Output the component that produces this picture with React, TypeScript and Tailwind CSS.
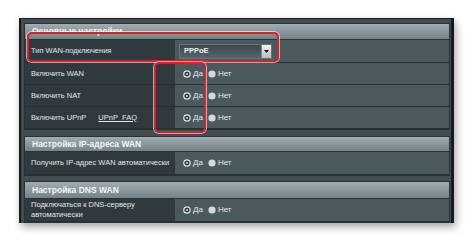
import type { ReactNode } from 'react'

function Radio({ checked }: { checked: boolean }) {
  return checked ? (
    <svg width="8" height="8" viewBox="0 0 8 8" className="shrink-0">
      <circle cx="4" cy="4" r="3.2" fill="#2a3336" stroke="#e6eaec" strokeWidth="1.2" />
      <circle cx="4" cy="4" r="1" fill="#e6eaec" />
    </svg>
  ) : (
    <svg width="8" height="8" viewBox="0 0 8 8" className="shrink-0">
      <circle cx="4" cy="4" r="3.6" fill="#d4d9db" />
    </svg>
  )
}

function YesNo() {
  return (
    <div className="flex items-center text-[8px] text-[#e4e8ea]">
      <Radio checked />
      <span className="ml-[2px]">Да</span>
      <span className="ml-[5px]"><Radio checked={false} /></span>
      <span className="ml-[2px]">Нет</span>
    </div>
  )
}

function Header({ title, h = 'h-[15px]' }: { title: string; h?: string }) {
  return (
    <div className={`${h} flex items-center pl-[7px] bg-gradient-to-b from-[#a0adb1] to-[#74838a] border-b border-[#2a3235] text-[8.5px] font-bold text-[#f4f6f7] whitespace-nowrap`}>
      {title}
    </div>
  )
}

function Row({ label, children, h = 'h-[22px]' }: { label: ReactNode; children: ReactNode; h?: string }) {
  return (
    <div className={`${h} flex border-b border-[#283033]`}>
      <div className="w-[150px] flex items-center pl-[6px] bg-[#303a3e] text-[7.5px] leading-[10px] text-[#e2e6e8] whitespace-nowrap">{label}</div>
      <div className="flex-1 flex items-center pl-[8px] bg-[#4a595e]">{children}</div>
    </div>
  )
}

export default function App() {
  return (
    <div className="relative w-[474px] h-[243px] bg-white overflow-hidden pt-[18px] pl-[19px]" style={{ fontFamily: '"Liberation Sans", Arial, sans-serif' }}>
      <div className="w-[435px] h-[205px] bg-[#434c50] border-l-2 border-r-[3px] border-t border-[#161b1d] shadow-[2px_4px_8px_rgba(0,0,0,0.35)] pl-[3px] pr-[1px] pt-[4px] flex flex-col">
        <div className="border border-[#2a3235]">
          <Header title="Основные настройки" h="h-[16px]" />
          <Row label="Тип WAN-подключения" h="h-[23px]">
            <div className="w-[93px] h-[15px] -ml-[4px] flex items-center justify-between bg-gradient-to-b from-[#3c494e] to-[#56656b] border border-[#65747a] pl-[4px]">
              <span className="text-[7.5px] font-bold text-[#f2f4f5]">PPPoE</span>
              <span className="w-[10px] h-[13px] flex items-center justify-center bg-gradient-to-b from-[#f2f2f2] to-[#bdbdbd] border-l border-[#7d878b]">
                <svg width="5" height="3" viewBox="0 0 5 3"><path d="M0 0h5L2.5 3z" fill="#111" /></svg>
              </span>
            </div>
          </Row>
          <Row label="Включить WAN"><YesNo /></Row>
          <Row label="Включить NAT"><YesNo /></Row>
          <Row label={<><span>Включить UPnP</span><span className="ml-[12px] underline">UPnP_FAQ</span></>}><YesNo /></Row>
        </div>
        <div className="mt-[6px] border border-[#2a3235]">
          <Header title="Настройка IP-адреса WAN" />
          <Row label="Получить IP-адрес WAN автоматически" h="h-[23px]"><YesNo /></Row>
        </div>
        <div className="mt-[5px] border border-[#2a3235]">
          <Header title="Настройка DNS WAN" h="h-[17px]" />
          <Row label={<span>Подключаться к DNS-серверу<br />автоматически</span>} h="h-[23px]"><YesNo /></Row>
        </div>
      </div>
      <div className="absolute left-[27px] top-[32px] w-[252px] h-[30px] rounded-[5px] border-2 border-[#d8202f] shadow-[0_0_0_1px_rgba(255,255,255,0.6)]" />
      <div className="absolute left-[154px] top-[62px] w-[52px] h-[71px] rounded-[5px] border-2 border-[#d8202f] shadow-[0_0_0_1px_rgba(255,255,255,0.6)]" />
    </div>
  )
}
